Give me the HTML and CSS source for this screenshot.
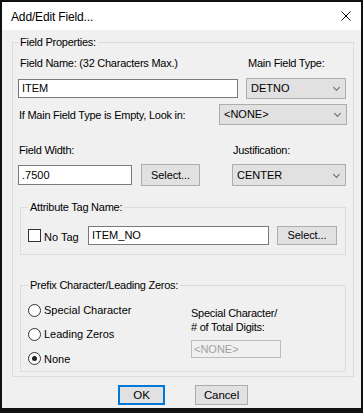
FILE: index.html
```html
<!DOCTYPE html>
<html lang="en">
<head>
    <meta charset="UTF-8">
    <title>Add/Edit Field...</title>
    <link rel="stylesheet" href="styles.css">
</head>
<body>

    <div class="window">
        <div class="titlebar">
            <span class="title">Add/Edit Field...</span>
            <svg class="close" width="10" height="10" viewBox="0 0 10 10">
                <path d="M0.5 0.5 L9.5 9.5 M9.5 0.5 L0.5 9.5" stroke="#111" stroke-width="1" fill="none"/>
            </svg>
        </div>

        <div class="client">
            <fieldset class="group outer">
                <legend>Field Properties:</legend>

                <div class="name-grid">
                    <span class="label">Field Name: (32 Characters Max.)</span>
                    <span class="label">Main Field Type:</span>
                    <div class="textbox">ITEM</div>
                    <div class="combo">DETNO <span class="chev"></span></div>
                </div>

                <div class="row look-row">
                    <span class="label">If Main Field Type is Empty, Look in:</span>
                    <div class="combo look">&lt;NONE&gt; <span class="chev"></span></div>
                </div>

                <div class="width-grid">
                    <span class="label">Field Width:</span>
                    <span></span>
                    <span class="label">Justification:</span>
                    <div class="textbox width-box">.7500</div>
                    <div class="button">Select...</div>
                    <div class="combo">CENTER <span class="chev"></span></div>
                </div>

                <fieldset class="group attr">
                    <legend>Attribute Tag Name:</legend>
                    <div class="row attr-row">
                        <span class="checkbox"></span>
                        <span class="no-tag">No Tag</span>
                        <div class="textbox tag">ITEM_NO</div>
                        <div class="button tag-btn">Select...</div>
                    </div>
                </fieldset>

                <fieldset class="group prefix">
                    <legend>Prefix Character/Leading Zeros:</legend>
                    <div class="row prefix-row">
                        <div class="radios">
                            <div class="radio-item"><span class="radio"></span>Special Character</div>
                            <div class="radio-item"><span class="radio"></span>Leading Zeros</div>
                            <div class="radio-item"><span class="radio checked"></span>None</div>
                        </div>
                        <div class="digits">
                            <span class="label">Special Character/</span>
                            <span class="label"># of Total Digits:</span>
                            <div class="textbox disabled">&lt;NONE&gt;</div>
                        </div>
                    </div>
                </fieldset>
            </fieldset>

            <div class="actions">
                <div class="button default">OK</div>
                <div class="button cancel">Cancel</div>
            </div>
        </div>
    </div>

</body>
</html>
```

FILE: styles.css
```css
*, *::before, *::after {
    box-sizing: border-box;
}
body {
    margin: 0;
    font-family: "Liberation Sans", Arial, sans-serif;
    font-size: 11px;
    line-height: 14px;
    color: #000;
    background: #000;
}
.window {
    width: 363px;
    height: 413px;
    border: solid #111;
    border-width: 2px 2px 5px 2px;
    background: #f0f0f0;
}
.titlebar {
    height: 28px;
    background: #fff;
    display: flex;
    align-items: center;
    justify-content: space-between;
    padding: 0 10px 0 9px;
}
.title {
    font-size: 12px;
    letter-spacing: -0.15px;
    padding-top: 2px;
}
.close {
    display: block;
}
.client {
    padding: 5px 7px 0 10px;
}
.group {
    margin: 0;
    border: 1px solid #dcdcdc;
}
.group legend {
    padding: 0 2px;
    line-height: 14px;
    letter-spacing: -0.25px;
}
.outer {
    padding: 7px 6px 4px 5px;
}
.label {
    white-space: nowrap;
    letter-spacing: -0.25px;
}
.name-grid {
    display: grid;
    grid-template-columns: 220px 100px;
    column-gap: 8px;
    row-gap: 8px;
    align-items: center;
}
.name-grid .label {
    padding-left: 2px;
}
.row {
    display: flex;
    align-items: center;
}
.look-row {
    justify-content: space-between;
    margin-top: 5px;
    padding-left: 1px;
}
.width-grid {
    display: grid;
    grid-template-columns: 114px 59px 1fr;
    column-gap: 9px;
    row-gap: 7px;
    align-items: center;
    margin-top: 18px;
}
.width-grid > :nth-child(3),
.width-grid > :nth-child(6) {
    margin: 0 1px 0 23px;
}
.width-grid .label {
    padding-left: 1px;
}
.textbox {
    height: 19px;
    line-height: 17px;
    border: 1px solid #7a7a7a;
    background: #fff;
    padding: 0 3px;
}
.width-box {
    height: 20px;
    line-height: 18px;
}
.combo {
    height: 21px;
    line-height: 19px;
    border: 1px solid #adadad;
    background: #e1e1e1;
    padding: 0 4px;
    position: relative;
}
.width-grid .combo {
    height: 22px;
    line-height: 20px;
}
.look {
    width: 128px;
}
.chev {
    position: absolute;
    right: 6px;
    top: 6px;
    width: 5px;
    height: 5px;
    border-right: 1px solid #666;
    border-bottom: 1px solid #666;
    transform: rotate(45deg);
}
.width-grid .chev {
    top: 7px;
}
.button {
    height: 22px;
    line-height: 20px;
    border: 1px solid #adadad;
    background: #e1e1e1;
    text-align: center;
    letter-spacing: -0.1px;
}
.attr {
    margin: 14px 1px 0 2px;
    padding: 12px 8px 9px 7px;
}
.checkbox {
    width: 13px;
    height: 13px;
    border: 1px solid #333;
    background: #fff;
}
.no-tag {
    width: 47px;
    padding-left: 3px;
    padding-top: 2px;
}
.tag {
    width: 181px;
}
.tag-btn {
    width: 60px;
    height: 19px;
    line-height: 17px;
    margin-left: 8px;
}
.prefix {
    margin: 23px 1px 0 2px;
    padding: 6px 8px 0 7px;
}
.prefix-row {
    align-items: flex-start;
}
.radios {
    width: 163px;
}
.radio-item {
    height: 24.3px;
    display: flex;
    align-items: center;
}
.radio {
    width: 13px;
    height: 13px;
    border: 1px solid #333;
    border-radius: 50%;
    background: #fff;
    margin-right: 3px;
    position: relative;
}
.radio.checked::after {
    content: "";
    position: absolute;
    left: 3px;
    top: 3px;
    width: 5px;
    height: 5px;
    border-radius: 50%;
    background: #222;
}
.digits {
    display: flex;
    flex-direction: column;
    margin-top: 8px;
}
.disabled {
    width: 90px;
    height: 18px;
    line-height: 16px;
    margin-top: 6px;
    border-color: #bcbcbc;
    background: #f0f0f0;
    color: #a0a0a0;
    padding: 0 2px;
}
.actions {
    display: flex;
    justify-content: center;
    gap: 30px;
    margin-top: 8px;
}
.actions .button {
    height: 20px;
    line-height: 18px;
    font-size: 11.5px;
}
.default {
    width: 47px;
    border: 2px solid #0078d7;
    line-height: 16px !important;
}
.cancel {
    width: 53px;
}
```
